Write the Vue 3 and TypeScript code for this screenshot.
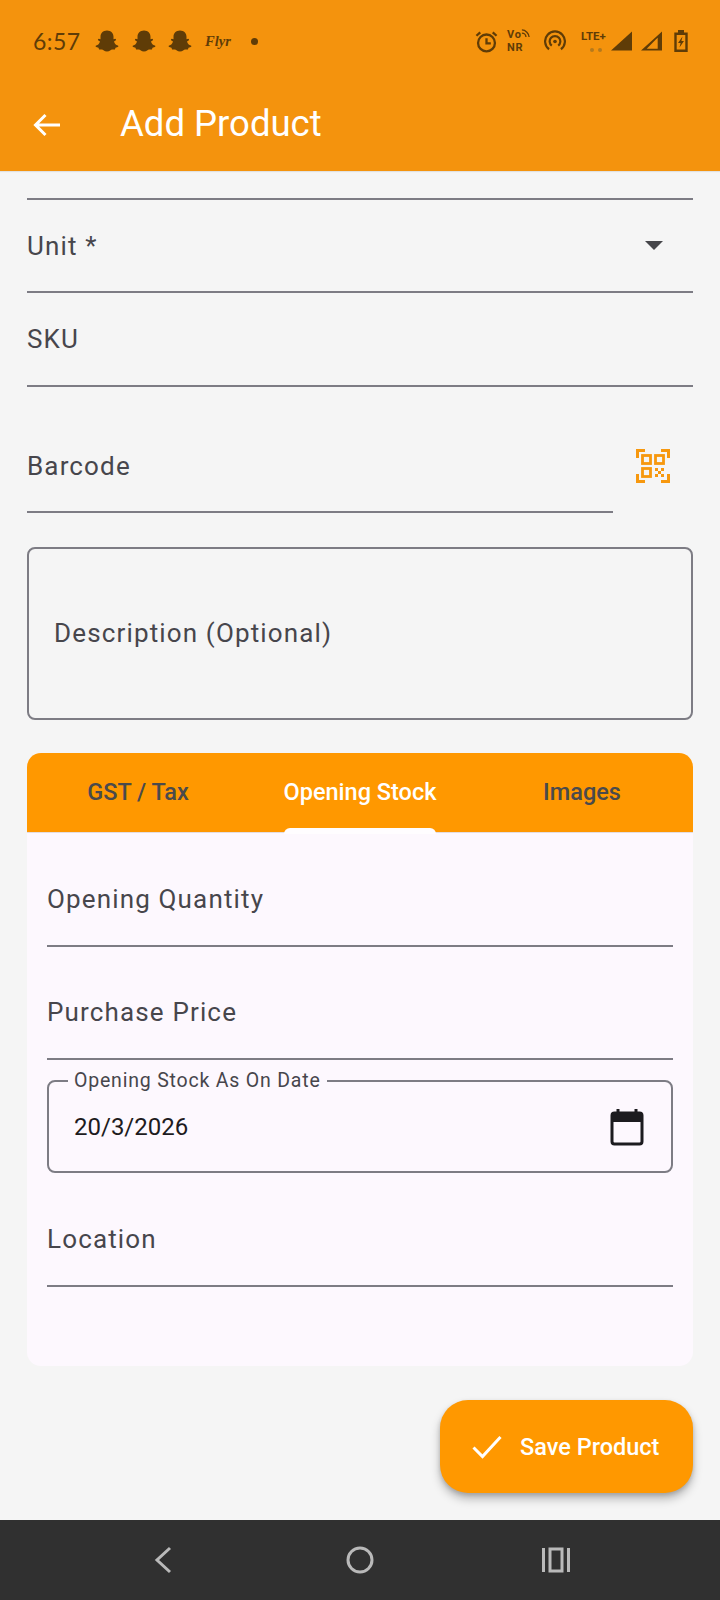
<template>
  <div class="screen">
    <header class="top">
      <div class="status">
        <span class="time">6:57</span>
        <div class="ghosts">
          <svg v-for="n in 3" :key="n" class="ghost" viewBox="0 0 24 24">
            <path d="M12 1.500c4 0 6.500 2.800 6.500 6.300v2.400l1.600-.4c1 0 1.300 1.200.5 1.700l-1.600.9c.6 2.200 2 3.600 3.800 4.200.8.300.7 1.200 0 1.500l-2.300.7-.6 1.700-2.700-.1c-1.300.1-2.500 2.100-5.200 2.100s-3.900-2-5.200-2.100l-2.700.1-.6-1.700-2.300-.7c-.7-.3-.8-1.200 0-1.500 1.800-.6 3.200-2 3.800-4.200l-1.600-.9c-.8-.5-.5-1.700.5-1.700l1.600.4V7.800c0-3.500 2.500-6.300 6.500-6.300z" />
          </svg>
        </div>
        <span class="flyr">Flyr</span>
        <span class="dot"></span>
        <div class="status-right">
          <svg class="st-alarm" viewBox="0 0 24 24" fill="none" stroke="currentColor" stroke-width="2.400">
            <circle cx="12" cy="13.500" r="8.800" />
            <path d="M12 8.500v5.500h4.500M1.500 6l4-3.500M22.500 6l-4-3.500" />
          </svg>
          <div class="vonr">
            <span>Vo</span>
            <span>NR</span>
            <svg class="vonr-wave" viewBox="0 0 10 10" fill="none" stroke="currentColor" stroke-width="1.500">
              <path d="M1 1c4 0 8 4 8 8M1 4.500c2.500 0 4.500 2 4.500 4.500" />
            </svg>
          </div>
          <svg class="st-hotspot" viewBox="0 0 24 24" fill="none" stroke="currentColor" stroke-width="2.400">
            <path d="M5.500 21a10.800 10.800 0 1 1 13 0M8.500 17a5.800 5.800 0 1 1 7 0" />
            <circle cx="12" cy="12.500" r="2" fill="currentColor" stroke="none" />
          </svg>
          <div class="lte">
            <span>LTE+</span>
            <i></i><i></i>
          </div>
          <svg class="st-signal" viewBox="0 0 22 20"><path d="M0 20 22 0v20z" fill="currentColor" /></svg>
          <svg class="st-signal second" viewBox="0 0 22 20">
            <path d="M0 20 22 0v20zM6 18h11.500V6.500L15.500 8.500z" fill="currentColor" fill-rule="evenodd" />
          </svg>
          <svg class="st-battery" viewBox="0 0 14 22" fill="none" stroke="currentColor" stroke-width="2.400">
            <path d="M4 1.200h6M1.500 3.800h11v17h-11z" />
            <path d="M8.500 6.500 4 13h2.600l-1.100 4.500L10 11H7.400z" fill="currentColor" stroke="none" />
          </svg>
        </div>
      </div>
      <div class="toolbar">
        <svg class="back" viewBox="0 0 27 24" fill="none" stroke="#fff" stroke-width="3">
          <path d="M27 12H2.500M12.500 2 2.500 12l10 10" />
        </svg>
        <h1>Add Product</h1>
      </div>
    </header>

    <main class="body">
      <div class="rule-top"></div>

      <div class="line-field">
        <span>Unit *</span>
        <svg class="caret" viewBox="0 0 18 10"><path d="M0 0h18l-9 9z" fill="#46464a" /></svg>
      </div>
      <div class="line-field sku">
        <span>SKU</span>
      </div>

      <div class="barcode-row">
        <div class="line-field barcode">
          <span>Barcode</span>
        </div>
        <svg class="qr" viewBox="0 0 34 34" fill="none" stroke="#f7980e" stroke-width="2.800">
          <path d="M1.500 9V1.500H9M25 1.500h7.500V9M32.500 25v7.500H25M9 32.500H1.500V25" stroke-width="3" />
          <rect x="6.500" y="6.500" width="8" height="8" />
          <rect x="19.500" y="6.500" width="8" height="8" />
          <rect x="6.500" y="19.500" width="8" height="8" />
          <path d="M19 19h3v3h-3zM25 19h3v3h-3zM22 22h3v3h-3zM19 25h3v3h-3zM25 25h3v3h-3z" fill="#f7980e" stroke="none" />
        </svg>
      </div>

      <div class="desc">Description (Optional)</div>

      <section class="card">
        <nav class="tabs">
          <div v-for="tab in tabs" :key="tab" class="tab" :class="{ active: tab === 'Opening Stock' }">
            <span class="tab-label">
              {{ tab }}
              <i v-if="tab === 'Opening Stock'" class="indicator"></i>
            </span>
          </div>
        </nav>
        <div class="panel">
          <div class="panel-field tall"><span>Opening Quantity</span></div>
          <div class="panel-field"><span>Purchase Price</span></div>
          <div class="date-box">
            <span class="legend">Opening Stock As On Date</span>
            <span class="date">20/3/2026</span>
            <svg class="cal" viewBox="0 0 34 38" fill="none">
              <path d="M8 1v6M26 1v6" stroke="#1c1b1f" stroke-width="3" />
              <rect x="2" y="5" width="30" height="31" rx="2.500" stroke="#1c1b1f" stroke-width="3" />
              <path d="M2 5h30v9H2z" fill="#1c1b1f" />
            </svg>
          </div>
          <div class="panel-field tall"><span>Location</span></div>
        </div>
      </section>
    </main>

    <button class="fab">
      <svg viewBox="0 0 30 24" fill="none" stroke="#fff" stroke-width="3">
        <path d="M1.500 12.500 10.500 21.500 28.500 2" />
      </svg>
      Save Product
    </button>

    <footer class="nav">
      <svg class="nav-back" viewBox="0 0 20 28" fill="none" stroke="#b9b9b9" stroke-width="3">
        <path d="M17 2 4 14l13 12" />
      </svg>
      <svg class="nav-home" viewBox="0 0 28 28" fill="none" stroke="#b9b9b9" stroke-width="3">
        <circle cx="14" cy="14" r="12" />
      </svg>
      <svg class="nav-recent" viewBox="0 0 28 26" fill="none" stroke="#b9b9b9" stroke-width="3">
        <path d="M1.500 1v24M26.500 1v24" />
        <rect x="8" y="2" width="12" height="22" />
      </svg>
    </footer>
  </div>
</template>

<script setup lang="ts">
const tabs: string[] = ['GST / Tax', 'Opening Stock', 'Images']
</script>

<style>
html,
body {
  margin: 0;
  background: #f5f5f5;
}
</style>

<style scoped>
.screen {
  position: relative;
  display: flex;
  flex-direction: column;
  width: 720px;
  height: 1600px;
  overflow: hidden;
  background: #f5f5f5;
  font-family: Roboto, "Liberation Sans", sans-serif;
}

.top {
  height: 171px;
  flex: none;
  background: #f4930d;
  box-shadow: 0 1px 1px rgba(0, 0, 0, 0.08);
}

.status {
  display: flex;
  align-items: center;
  height: 80px;
  box-sizing: border-box;
  padding: 2px 0 0 33px;
  color: #5f3c07;
}

.time {
  width: 62px;
  font-family: Lato, "Open Sans", sans-serif;
  font-size: 23px;
  letter-spacing: 0.4px;
}

.ghosts {
  display: flex;
  gap: 12.500px;
}

.ghost {
  width: 24px;
  height: 24px;
  fill: currentColor;
}

.flyr {
  margin-left: 13px;
  font-family: "Liberation Serif", serif;
  font-size: 14.500px;
  font-weight: 700;
  font-style: italic;
}

.dot {
  width: 7px;
  height: 7px;
  margin-left: 20px;
  border-radius: 50%;
  background: currentColor;
}

.status-right {
  display: flex;
  align-items: center;
  margin-left: auto;
  margin-right: 32px;
}

.st-alarm {
  width: 23px;
  height: 23px;
}

.vonr {
  position: relative;
  display: flex;
  flex-direction: column;
  width: 23px;
  margin-left: 9px;
  font-size: 11px;
  font-weight: 700;
  line-height: 13px;
  letter-spacing: 0.8px;
}

.vonr-wave {
  position: absolute;
  top: 1px;
  right: 0;
  width: 9px;
  height: 9px;
}

.st-hotspot {
  width: 22px;
  height: 22px;
  margin-left: 14px;
}

.lte {
  position: relative;
  width: 30px;
  margin-left: 15px;
  margin-top: -10px;
  font-size: 11.500px;
  font-weight: 700;
}

.lte i {
  position: absolute;
  top: 19px;
  left: 9px;
  width: 4px;
  height: 4px;
  border-radius: 50%;
  background: #b57a1c;
}

.lte i + i {
  left: 17px;
}

.st-signal {
  width: 21px;
  height: 20px;
}

.st-signal.second {
  margin-left: 9px;
}

.st-battery {
  width: 14px;
  height: 22px;
  margin-left: 12px;
}

.toolbar {
  display: flex;
  align-items: center;
  height: 91px;
  padding-left: 33px;
}

.back {
  width: 27px;
  height: 24px;
  margin-top: -2px;
}

h1 {
  margin: -2px 0 0 60px;
  color: #fff;
  font-size: 36.500px;
  font-weight: 400;
  line-height: 1;
}

.body {
  display: flex;
  flex-direction: column;
  padding: 27px 27px 0;
}

.rule-top {
  height: 2px;
  background: #7d7c84;
}

.line-field {
  display: flex;
  align-items: center;
  justify-content: space-between;
  height: 93px;
  box-sizing: border-box;
  border-bottom: 2px solid #7d7c84;
  color: #47464c;
  font-size: 26px;
  letter-spacing: 1.150px;
}

.line-field.sku {
  height: 94px;
}

.caret {
  width: 18px;
  height: 10px;
  margin-right: 30px;
}

.barcode-row {
  display: flex;
  align-items: flex-start;
}

.barcode {
  width: 586px;
  height: 126px;
  padding-top: 34px;
}

.qr {
  width: 34px;
  height: 34px;
  margin-left: 23px;
  margin-top: 62px;
}

.desc {
  display: flex;
  align-items: center;
  height: 173px;
  box-sizing: border-box;
  margin-top: 34px;
  padding: 0 25px 2px;
  border: 2px solid #7d7c84;
  border-radius: 8px;
  color: #47464c;
  font-size: 26px;
  letter-spacing: 1.150px;
}

.card {
  margin-top: 33px;
  border-radius: 14px;
  overflow: hidden;
  background: #fdf8fe;
}

.tabs {
  display: grid;
  grid-template-columns: repeat(3, 1fr);
  height: 80px;
  background: #ff9800;
  border-bottom: 1px solid #e4dde0;
  box-sizing: border-box;
}

.tab {
  display: flex;
  align-items: center;
  justify-content: center;
  color: #4a4a4c;
  font-size: 23.500px;
  font-weight: 500;
}

.tab.active {
  color: #fff;
}

.tab-label {
  position: relative;
  display: flex;
  align-items: center;
  height: 100%;
  box-sizing: border-box;
  padding-bottom: 2px;
}

.indicator {
  position: absolute;
  left: 0;
  right: 0;
  bottom: -2px;
  height: 6px;
  border-radius: 6px 6px 0 0;
  background: #fffdff;
}

.panel {
  height: 533px;
  padding: 0 20px;
}

.panel-field {
  display: flex;
  align-items: center;
  height: 113px;
  box-sizing: border-box;
  padding-top: 19px;
  border-bottom: 2px solid #7d7c84;
  color: #47464c;
  font-size: 26px;
  letter-spacing: 1.150px;
}

.panel-field.tall {
  height: 114px;
}

.date-box {
  position: relative;
  display: flex;
  align-items: center;
  justify-content: space-between;
  height: 93px;
  box-sizing: border-box;
  margin-top: 20px;
  padding: 0 26px 0 25px;
  border: 2px solid #7d7c84;
  border-radius: 8px;
  color: #1d1b20;
  font-size: 24px;
}

.legend {
  position: absolute;
  top: -12px;
  left: 19px;
  padding: 0 6px;
  background: #fdf8fe;
  color: #47464c;
  font-size: 19.500px;
  line-height: 22px;
  letter-spacing: 0.8px;
}

.cal {
  width: 34px;
  height: 38px;
  margin-right: 1px;
}

.fab {
  position: absolute;
  left: 440px;
  top: 1400px;
  display: flex;
  align-items: center;
  gap: 18px;
  width: 253px;
  height: 93px;
  padding: 0 0 0 32px;
  border: none;
  border-radius: 28px;
  background: #ff9800;
  box-shadow: 0 6px 10px rgba(0, 0, 0, 0.25), 0 2px 4px rgba(0, 0, 0, 0.15);
  color: #fff;
  font-family: inherit;
  font-size: 23.500px;
  font-weight: 500;
}

.fab svg {
  width: 30px;
  height: 24px;
}

.nav {
  position: absolute;
  left: 0;
  right: 0;
  bottom: 0;
  display: flex;
  align-items: center;
  height: 80px;
  background: #303030;
}

.nav-back {
  width: 20px;
  height: 28px;
  margin-left: 153px;
}

.nav-home {
  width: 28px;
  height: 28px;
  margin-left: 173px;
}

.nav-recent {
  width: 28px;
  height: 26px;
  margin-left: 168px;
}
</style>
